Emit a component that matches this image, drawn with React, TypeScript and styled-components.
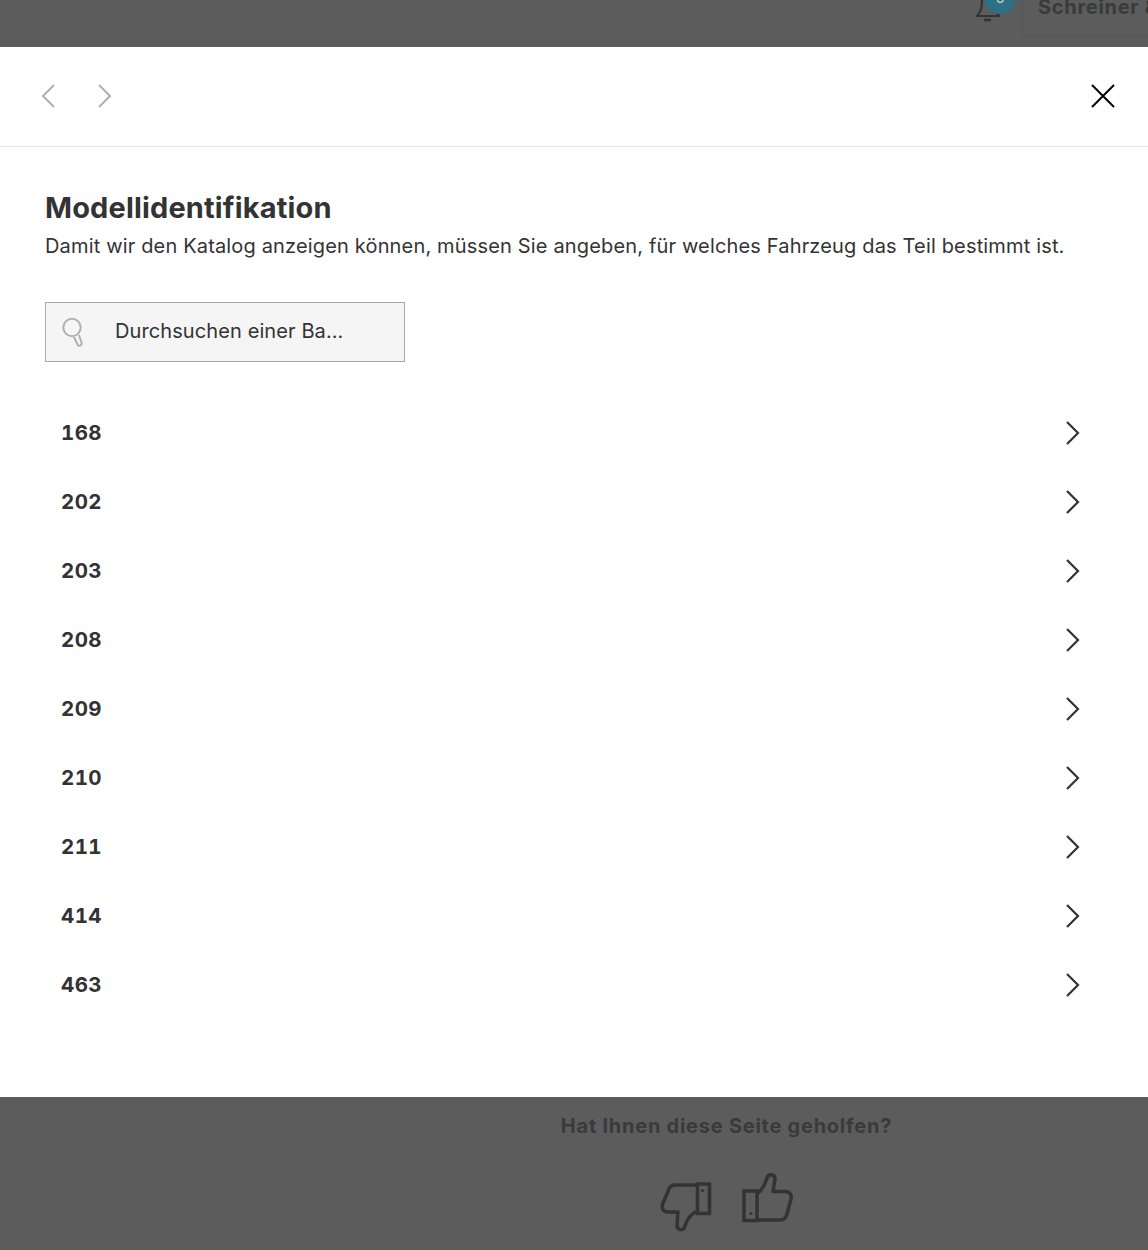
import styled, { createGlobalStyle } from "styled-components";

const models = ["168", "202", "203", "208", "209", "210", "211", "414", "463"];

const GlobalStyle = createGlobalStyle`
  html, body {
    margin: 0;
    padding: 0;
    background: #5c5c5c;
    font-family: "Inter", "Liberation Sans", sans-serif;
    color: #333;
    overflow: hidden;
  }
`;

const Page = styled.div`
  width: 1148px;
  height: 1250px;
  overflow: hidden;
  background: #5c5c5c;
`;

const TopBar = styled.header`
  height: 47px;
  display: flex;
  justify-content: flex-end;
  overflow: hidden;
`;

const Bell = styled.div`
  position: relative;
  width: 41px;
  height: 37px;
  margin-right: 5px;
`;

const BellBadge = styled.span`
  position: absolute;
  left: 8px;
  top: -18px;
  width: 32px;
  height: 32px;
  border-radius: 50%;
  background: #2d6f85;
  color: #c9d6da;
  font-size: 14px;
  line-height: 32px;
  text-align: center;
`;

const AccountButton = styled.div`
  width: 126px;
  height: 37px;
  border: 1px solid #555;
  border-right: 0;
  border-top: 0;
  border-radius: 0 0 0 6px;
  padding-left: 15px;
  box-sizing: border-box;
  font-size: 20px;
  line-height: 14px;
  font-weight: 700;
  letter-spacing: 0.7px;
  white-space: nowrap;
  overflow: hidden;
  color: #3a3a3a;
`;

const Modal = styled.main`
  height: 1050px;
  background: #fff;
`;

const ModalHeader = styled.div`
  height: 100px;
  box-sizing: border-box;
  border-bottom: 1px solid #e5e5e5;
  display: flex;
  align-items: center;
  padding: 0 32px 1px 40px;
`;

const NavButtons = styled.div`
  display: flex;
  gap: 40px;
  flex: 1;
`;

const ModalBody = styled.div`
  padding: 44px 45px 0;
`;

const Title = styled.h1`
  margin: 0;
  font-size: 29px;
  line-height: 34px;
  font-weight: 700;
  letter-spacing: 0.15px;
  color: #333;
`;

const Subtitle = styled.p`
  margin: 6px 0 0;
  font-size: 20px;
  line-height: 30px;
  letter-spacing: 0.16px;
  color: #333;
  white-space: nowrap;
`;

const SearchBox = styled.div`
  margin-top: 41px;
  width: 360px;
  height: 60px;
  box-sizing: border-box;
  border: 1px solid #a8a8a8;
  background: #f5f5f5;
  display: flex;
  align-items: center;
  padding-left: 16px;
  gap: 27px;
  font-size: 20px;
  letter-spacing: 0.1px;
  color: #333;
`;

const SearchHint = styled.span`
  margin-bottom: 3px;
`;

const ModelList = styled.ul`
  list-style: none;
  margin: 36px 0 0;
  padding: 0;
`;

const ModelRow = styled.li`
  height: 69px;
  display: flex;
  align-items: center;
  justify-content: space-between;
  padding: 0 23px 0 16px;
  font-size: 20.5px;
  font-weight: 700;
  font-variant-numeric: tabular-nums;
  letter-spacing: 0.4px;
  color: #333;
`;

const Footer = styled.footer`
  display: flex;
  flex-direction: column;
  align-items: center;
  padding: 15px 0 0 305px;
`;

const FooterTitle = styled.div`
  font-size: 20px;
  line-height: 28px;
  font-weight: 700;
  letter-spacing: 0.75px;
  color: #3a3a3a;
`;

const Thumbs = styled.div`
  margin-top: 32px;
  display: flex;
  gap: 28px;
`;

function Chevron({ left, color, width = 2 }: { left?: boolean; color: string; width?: number }) {
  return (
    <svg width="16" height="26" viewBox="0 0 16 26" fill="none">
      <path
        d={left ? "M14 2 L3 13 L14 24" : "M3 2 L14 13 L3 24"}
        stroke={color}
        strokeWidth={width}
      />
    </svg>
  );
}

function ThumbDown() {
  return (
    <svg width="52" height="60" viewBox="0 0 52 60" fill="none" stroke="#333" strokeWidth="3.5">
      <path d="M37 13 H16 C12 13 10 14 9 17 L3 31 C1 36 3 40 8 40 H18 L17 53 C17 59 24 59 25 54 C27 47 31 42 37 39" strokeLinejoin="round" />
      <rect x="37.5" y="12" width="12" height="29.5" />
      <circle cx="42.5" cy="18.5" r="1.6" fill="#333" stroke="none" />
    </svg>
  );
}

function ThumbUp() {
  return (
    <svg width="54" height="60" viewBox="0 0 54 60" fill="none" stroke="#333" strokeWidth="3.5">
      <path d="M17 22 C22 18 25 13 27 6 C28 1 35 2 35 7 L33 19.5 H45 C50 19.5 52 23 51 27 L47 42 C46 46 44 48 40 48 H17" strokeLinejoin="round" />
      <rect x="4" y="19" width="13" height="29.5" />
      <circle cx="11" cy="41.5" r="1.6" fill="#333" stroke="none" />
    </svg>
  );
}

export default function App() {
  return (
    <Page>
      <GlobalStyle />
      <TopBar>
        <Bell>
          <svg width="26" height="23" viewBox="0 0 26 23" fill="none" stroke="#333" strokeWidth="2.2">
            <path d="M6 0 C6 8 5 11 1 16 H23 C19 11 18 8 18 0" strokeLinejoin="round" />
            <path d="M8 20 H15" strokeWidth="2.6" />
          </svg>
          <BellBadge>6</BellBadge>
        </Bell>
        <AccountButton>Schreiner &amp;</AccountButton>
      </TopBar>
      <Modal>
        <ModalHeader>
          <NavButtons>
            <Chevron left color="#b0b0b0" />
            <Chevron color="#b0b0b0" />
          </NavButtons>
          <svg width="26" height="26" viewBox="0 0 26 26" fill="none" stroke="#000" strokeWidth="2">
            <path d="M2 2 L24 24 M24 2 L2 24" />
          </svg>
        </ModalHeader>
        <ModalBody>
          <Title>Modellidentifikation</Title>
          <Subtitle>Damit wir den Katalog anzeigen können, müssen Sie angeben, für welches Fahrzeug das Teil bestimmt ist.</Subtitle>
          <SearchBox>
            <svg width="26" height="30" viewBox="0 0 26 30" fill="none" stroke="#b0b0b0" strokeWidth="2">
              <circle cx="10" cy="10.5" r="8.7" />
              <path d="M12 20 L15.5 27.5 C17 30 20.5 28.5 19.5 25.5 L17 18" />
            </svg>
            <SearchHint>Durchsuchen einer Ba...</SearchHint>
          </SearchBox>
          <ModelList>
            {models.map((m) => (
              <ModelRow key={m}>
                {m}
                <Chevron color="#333" width={2.2} />
              </ModelRow>
            ))}
          </ModelList>
        </ModalBody>
      </Modal>
      <Footer>
        <FooterTitle>Hat Ihnen diese Seite geholfen?</FooterTitle>
        <Thumbs>
          <ThumbDown />
          <ThumbUp />
        </Thumbs>
      </Footer>
    </Page>
  );
}
